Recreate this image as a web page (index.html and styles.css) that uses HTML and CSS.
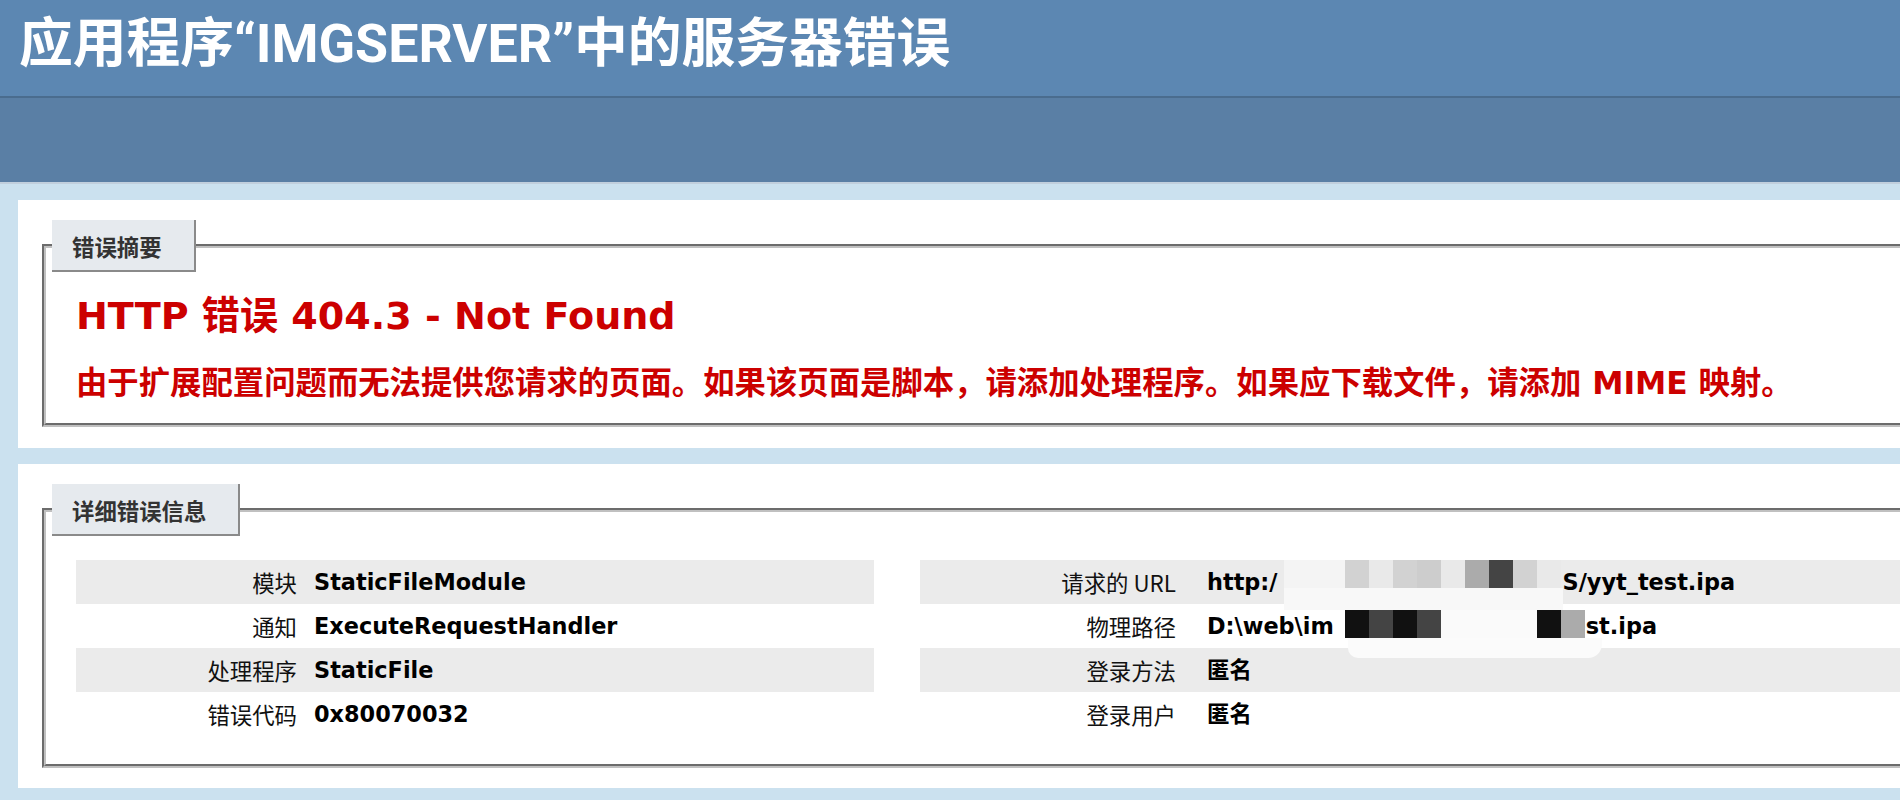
FILE: index.html
```html
<!DOCTYPE html>
<html lang="zh-CN">
<head>
<meta charset="utf-8">
<title>IIS 7.5 详细错误 - 404.3 - Not Found</title>
<link rel="stylesheet" href="styles.css">
</head>
<body>
<div class="header"><h1>应用程序“IMGSERVER”中的服务器错误</h1></div>
<div class="server-version"></div>
<div class="content">
  <div class="container summary">
    <fieldset>
      <legend>错误摘要</legend>
      <h2>HTTP 错误 404.3 - Not Found</h2>
      <h3>由于扩展配置问题而无法提供您请求的页面。如果该页面是脚本，请添加处理程序。如果应下载文件，请添加 MIME 映射。</h3>
    </fieldset>
  </div>
  <div class="container details">
    <fieldset>
      <legend>详细错误信息</legend>
      <div class="cols">
        <div class="details-left">
          <table>
            <tr class="alt"><th>模块</th><td>StaticFileModule</td></tr>
            <tr><th>通知</th><td>ExecuteRequestHandler</td></tr>
            <tr class="alt"><th>处理程序</th><td>StaticFile</td></tr>
            <tr><th>错误代码</th><td>0x80070032</td></tr>
          </table>
        </div>
        <div class="details-right">
          <table>
            <tr class="alt"><th>请求的 URL</th><td>http:/<span class="gap gap-url"></span>S/yyt_test.ipa</td></tr>
            <tr><th>物理路径</th><td>D:\web\im<span class="gap gap-path"></span>test.ipa</td></tr>
            <tr class="alt"><th>登录方法</th><td>匿名</td></tr>
            <tr><th>登录用户</th><td>匿名</td></tr>
          </table>
          <div class="mosaic">
            <div class="mrow r1">
              <i class="lead"></i><i class="c2"></i><i class="c1"></i><i class="c2"></i><i class="c3"></i><i class="c1"></i><i class="c4"></i><i class="c7"></i><i class="c2"></i><i class="c1"></i>
            </div>
            <div class="band"></div>
            <div class="mrow r2">
              <i class="c9"></i><i class="c7"></i><i class="c9"></i><i class="c7"></i><i class="c0"></i><i class="c0"></i><i class="c0"></i><i class="c0"></i><i class="c9"></i><i class="c4"></i>
            </div>
            <div class="smear"></div>
          </div>
        </div>
      </div>
    </fieldset>
  </div>
</div>
</body>
</html>
```

FILE: styles.css
```css
html, body {
  margin: 0;
  padding: 0;
}

body {
  background: #CBE1EF;
  font-family: "DejaVu Sans", "Noto Sans CJK SC", sans-serif;
  font-size: 22.4px;
  color: #000;
  width: 1900px;
  height: 800px;
  overflow: hidden;
}

.header {
  background: #5C87B2;
  height: 96px;
  box-sizing: border-box;
  padding: 8px 0 0 19px;
}

.header h1 {
  margin: 0;
  font-family: "Roboto", "Noto Sans CJK SC", sans-serif;
  font-weight: 700;
  font-size: 53.76px;
  line-height: 72px;
  color: #fff;
  white-space: nowrap;
}

.server-version {
  background: #5A7FA5;
  border-top: 2px solid #4A6C8E;
  border-bottom: 2px solid #C1CFDD;
  height: 84px;
}

.content {
  padding-left: 18px;
}

.container {
  background: #fff;
  width: 2356px;
  margin-top: 16px;
  padding: 20px;
}

.summary {
  padding-bottom: 21px;
}

fieldset {
  margin: 0 4px;
  border: 4px groove #c0c0c0;
  padding: 0 30px 18px 30px;
  min-width: 0;
}

.details fieldset {
  padding-bottom: 28px;
}

legend {
  margin-left: -24px;
  padding: 6px 32px 4px 20px;
  line-height: 40px;
  background: #e6eaee;
  border-right: 2px solid #8a8a8a;
  border-bottom: 2px solid #8a8a8a;
  font-family: "Noto Sans CJK SC", sans-serif;
  font-weight: 700;
  font-size: 22.4px;
  color: #333;
}

h2 {
  margin: 22px 0 0 0;
  font-size: 38.08px;
  line-height: 44px;
  font-weight: 700;
  color: #CC0000;
  white-space: nowrap;
}

h3 {
  margin: 23px 0 0 0;
  font-size: 31.36px;
  line-height: 44px;
  font-weight: 700;
  color: #CC0000;
  white-space: nowrap;
}

.cols {
  display: flex;
  gap: 46px;
  margin-top: 24px;
}

.details-left {
  width: 798px;
}

.details-right {
  width: 1436px;
  position: relative;
}

table {
  border-collapse: collapse;
  width: 100%;
}

tr.alt {
  background: #EBEBEB;
}

th, td {
  height: 44px;
  padding: 0;
  line-height: 44px;
  vertical-align: middle;
  white-space: nowrap;
}

th {
  text-align: right;
  font-weight: 400;
  font-family: "Noto Sans CJK SC", sans-serif;
  color: #111;
}

td {
  font-weight: 700;
  text-align: left;
  padding-left: 17px;
}

.details-left th {
  width: 221px;
}

.details-right th {
  width: 256px;
}

.details-right td {
  padding-left: 31px;
}

.gap {
  display: inline-block;
}

.gap-url {
  width: 285px;
}

.gap-path {
  width: 226px;
}

/* redaction mosaic drawn over the blurred part of the values */
.mosaic {
  position: absolute;
  left: 364px;
  top: 0;
  width: 280px;
}

.mrow {
  display: flex;
  height: 28px;
}

.mrow i {
  display: block;
  width: 24px;
  height: 100%;
  flex: none;
}

.mrow i.lead {
  width: 61px;
  background: #f4f4f4;
}

.band {
  height: 22px;
  width: 279px;
  background: #f8f8f8;
}

.mrow.r2 {
  margin-left: 61px;
}

.smear {
  margin-left: 64px;
  width: 254px;
  height: 20px;
  background: #fbfbfb;
  border-radius: 0 0 14px 10px;
}

.c0 { background: #fafafa; }
.c1 { background: #e9e9e9; }
.c2 { background: #d2d2d2; }
.c3 { background: #cdcdcd; }
.c4 { background: #ababab; }
.c7 { background: #444444; }
.c9 { background: #111111; }
```
